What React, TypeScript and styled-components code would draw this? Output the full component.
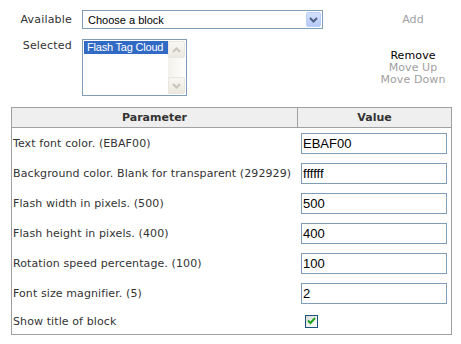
import styled, { createGlobalStyle } from 'styled-components';

const GlobalStyle = createGlobalStyle`
  html, body {
    margin: 0;
    padding: 0;
    background: #ffffff;
  }
  body {
    font-family: "DejaVu Sans", Verdana, sans-serif;
    font-size: 11px;
    color: #333333;
  }
`;

const Page = styled.div`
  width: 461px;
  padding: 10px 9px 0 11px;
  box-sizing: border-box;
`;

const BlockPicker = styled.div`
  display: grid;
  grid-template-columns: 71px 1fr 78px;
  row-gap: 10px;
  align-items: center;
`;

const FieldLabel = styled.div<{ top?: boolean }>`
  text-align: right;
  padding-right: 10px;
  letter-spacing: 0.2px;
  align-self: ${p => (p.top ? 'start' : 'center')};
  color: #333333;
`;

const FakeSelect = styled.div`
  width: 241px;
  height: 19px;
  box-sizing: border-box;
  border: 1px solid #7f9db9;
  display: flex;
  align-items: center;
  justify-content: space-between;
  padding: 0 1px 0 5px;
  font-family: "Liberation Sans", Arial, sans-serif;
  font-size: 11px;
  color: #000000;
`;

const DropButton = styled.div`
  width: 15px;
  height: 15px;
  box-sizing: border-box;
  border: 1px solid #bccdf8;
  border-radius: 2px;
  background: linear-gradient(#d4e1fd, #b6c9f6);
  display: flex;
  align-items: center;
  justify-content: center;
`;

const ListBox = styled.div`
  width: 105px;
  height: 57px;
  box-sizing: border-box;
  border: 1px solid #7f9db9;
  display: flex;
  padding: 1px;
  font-family: "Liberation Sans", Arial, sans-serif;
  font-size: 11px;
`;

const ListItems = styled.div`
  flex: 1;
  min-width: 0;
`;

const ListItem = styled.div<{ selected?: boolean }>`
  height: 13px;
  line-height: 13px;
  padding-left: 3px;
  letter-spacing: -0.2px;
  background: ${p => (p.selected ? '#316ac5' : 'transparent')};
  color: ${p => (p.selected ? '#ffffff' : '#000000')};
  white-space: nowrap;
  overflow: hidden;
`;

const ScrollTrack = styled.div`
  width: 17px;
  display: flex;
  flex-direction: column;
  justify-content: space-between;
  background: linear-gradient(90deg, #f3f1ec, #fefefb);
`;

const ScrollArrow = styled.div`
  width: 17px;
  height: 17px;
  box-sizing: border-box;
  border: 1px solid #e8e6df;
  border-radius: 2px;
  background: linear-gradient(#f8f7f2, #ebe9e1);
  display: flex;
  align-items: center;
  justify-content: center;
`;

const ActionCell = styled.div`
  display: flex;
  flex-direction: column;
  align-items: center;
  line-height: 12px;
  letter-spacing: 0.1px;
`;

const ActionLink = styled.span<{ enabled?: boolean }>`
  color: ${p => (p.enabled ? '#000000' : '#a0a0a0')};
`;

const ParamTable = styled.div`
  margin-top: 11px;
  width: 441px;
  box-sizing: border-box;
  border: 1px solid #a0a0a0;
`;

const HeadRow = styled.div`
  display: grid;
  grid-template-columns: 285px 1fr;
  height: 20px;
  box-sizing: border-box;
  background: #efefef;
  border-bottom: 1px solid #a0a0a0;
`;

const HeadCell = styled.div<{ divider?: boolean }>`
  display: flex;
  align-items: center;
  justify-content: center;
  font-weight: bold;
  color: #333333;
  border-left: ${p => (p.divider ? '1px solid #a0a0a0' : 'none')};
`;

const BodyRow = styled.div<{ short?: boolean }>`
  display: grid;
  grid-template-columns: 286px 1fr;
  height: ${p => (p.short ? '26px' : '30px')};
  align-items: center;
`;

const ParamName = styled.div`
  padding-left: 1px;
  letter-spacing: 0.1px;
  white-space: nowrap;
  color: #333333;
`;

const ValueCell = styled.div`
  padding-left: 3px;
  display: flex;
  align-items: center;
`;

const TextInput = styled.input`
  width: 146px;
  height: 21px;
  box-sizing: border-box;
  border: 1px solid #7f9db9;
  padding: 0 1px;
  margin: 0;
  font-family: "Liberation Sans", Arial, sans-serif;
  font-size: 13px;
  color: #000000;
  outline: none;
`;

const CheckBox = styled.div`
  width: 13px;
  height: 13px;
  margin-left: 4px;
  box-sizing: border-box;
  border: 1px solid #1c5180;
  background: linear-gradient(135deg, #dcdcd7, #ffffff);
  display: flex;
  align-items: center;
  justify-content: center;
`;

const Chevron = ({ color, down }: { color: string; down: boolean }) => (
  <svg width="9" height="6" viewBox="0 0 9 6">
    <path
      d={down ? 'M1 1 L4.5 4.5 L8 1' : 'M1 5 L4.5 1.5 L8 5'}
      fill="none"
      stroke={color}
      strokeWidth="2"
    />
  </svg>
);

const params = [
  { label: 'Text font color. (EBAF00)', value: 'EBAF00' },
  { label: 'Background color. Blank for transparent (292929)', value: 'ffffff' },
  { label: 'Flash width in pixels. (500)', value: '500' },
  { label: 'Flash height in pixels. (400)', value: '400' },
  { label: 'Rotation speed percentage. (100)', value: '100' },
  { label: 'Font size magnifier. (5)', value: '2' },
];

export default function App() {
  return (
    <>
      <GlobalStyle />
      <Page>
        <BlockPicker>
          <FieldLabel>Available</FieldLabel>
          <FakeSelect>
            <span>Choose a block</span>
            <DropButton>
              <Chevron color="#4d6185" down />
            </DropButton>
          </FakeSelect>
          <ActionCell>
            <ActionLink>Add</ActionLink>
          </ActionCell>

          <FieldLabel top>Selected</FieldLabel>
          <ListBox>
            <ListItems>
              <ListItem selected>Flash Tag Cloud</ListItem>
            </ListItems>
            <ScrollTrack>
              <ScrollArrow>
                <Chevron color="#c9c7ba" down={false} />
              </ScrollArrow>
              <ScrollArrow>
                <Chevron color="#c9c7ba" down />
              </ScrollArrow>
            </ScrollTrack>
          </ListBox>
          <ActionCell>
            <ActionLink enabled>Remove</ActionLink>
            <ActionLink>Move Up</ActionLink>
            <ActionLink>Move Down</ActionLink>
          </ActionCell>
        </BlockPicker>

        <ParamTable>
          <HeadRow>
            <HeadCell>Parameter</HeadCell>
            <HeadCell divider>Value</HeadCell>
          </HeadRow>
          {params.map(p => (
            <BodyRow key={p.label}>
              <ParamName>{p.label}</ParamName>
              <ValueCell>
                <TextInput defaultValue={p.value} />
              </ValueCell>
            </BodyRow>
          ))}
          <BodyRow short>
            <ParamName>Show title of block</ParamName>
            <ValueCell>
              <CheckBox>
                <svg width="9" height="8" viewBox="0 0 9 8">
                  <path d="M1 3.5 L3.5 6 L8 1" fill="none" stroke="#21a121" strokeWidth="2" />
                </svg>
              </CheckBox>
            </ValueCell>
          </BodyRow>
        </ParamTable>
      </Page>
    </>
  );
}
